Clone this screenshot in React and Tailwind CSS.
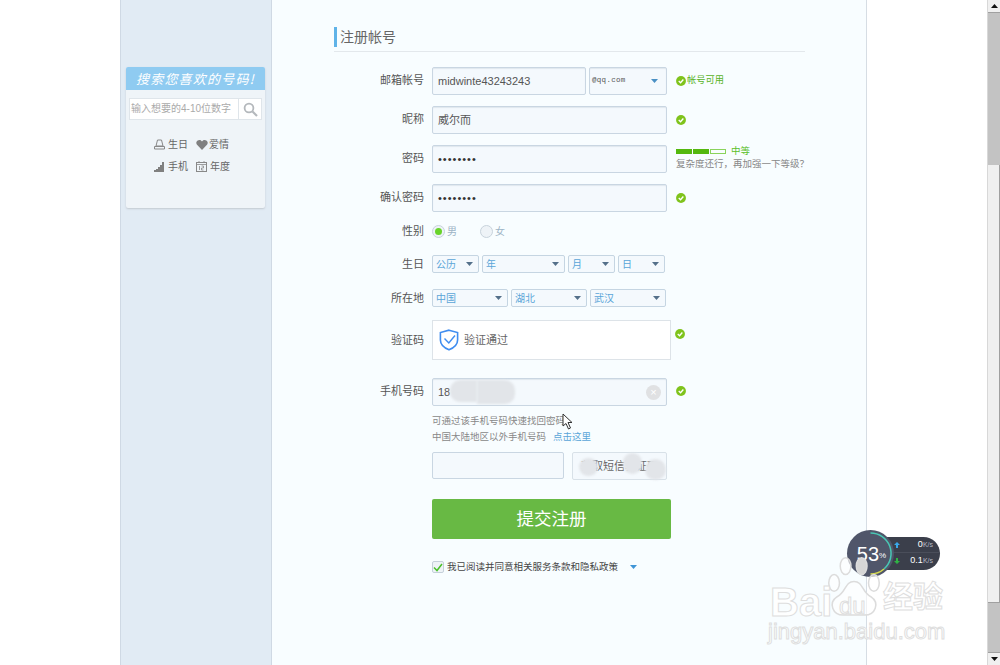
const font = "font-['Liberation_Sans','Noto_Sans_CJK_SC',sans-serif]";

function Check() {
  return (
    <svg width="10" height="10" viewBox="0 0 11 11" className="shrink-0">
      <circle cx="5.5" cy="5.5" r="5.4" fill="#7fc31c" />
      <path d="M3 5.6 L5 7.4 L8.1 3.9" fill="none" stroke="#fff" strokeWidth="1.5" />
    </svg>
  );
}

function Caret({ color = "#4a90c4" }) {
  return (
    <svg width="7" height="4" viewBox="0 0 7 4" className="shrink-0">
      <path d="M0 0H7L3.5 4Z" fill={color} />
    </svg>
  );
}

function Row({ label, className = "", labelClass = "leading-[26px]", children }) {
  return (
    <div className={`flex ${className}`}>
      <div className={`w-[90px] mr-2 text-right text-[11px] text-[#555] shrink-0 ${labelClass}`}>{label}</div>
      {children}
    </div>
  );
}

function Field({ className = "", children }) {
  return (
    <div className={`h-[28px] border border-[#c9d6e2] rounded-[2px] bg-[#f4f9fd] shadow-[inset_0_1px_1px_#dfe7ee] flex items-center px-[5px] text-[#555] relative ${className}`}>
      {children}
    </div>
  );
}

function Select({ text, width }) {
  return (
    <div style={{ width }} className="h-[18px] border border-[#c5d5e2] rounded-[2px] bg-[#f4f9fd] flex items-center justify-between pl-[3px] pr-[5px] text-[10px] text-[#5aa5d8]">
      <span>{text}</span>
      <Caret color="#54708a" />
    </div>
  );
}

function SideLink({ icon, text }) {
  return (
    <div className="flex items-center gap-[3px] text-[10px] text-[#666]">
      {icon}
      <span>{text}</span>
    </div>
  );
}

function Blot({ className }) {
  return <div className={`absolute bg-[#e2e5e9] blur-[1px] ${className}`} />;
}

function Scrollbar() {
  return (
    <div className="w-[13px] shrink-0 flex flex-col bg-[#c3c3c3] border-l border-[#d8d8d8]">
      <div className="h-[13px] bg-[#f0f0f0] border-b border-[#a0a0a0] flex items-center justify-center">
        <svg width="7" height="4" viewBox="0 0 7 4"><path d="M0 4H7L3.5 0Z" fill="#111" /></svg>
      </div>
      <div className="h-[152px]" />
      <div className="h-[438px] bg-[#f0f0f0] border-r border-[#a0a0a0] border-b" />
      <div className="flex-1" />
      <div className="h-[13px] bg-[#f0f0f0] border-t border-[#a0a0a0] flex items-center justify-center">
        <svg width="7" height="4" viewBox="0 0 7 4"><path d="M0 0H7L3.5 4Z" fill="#111" /></svg>
      </div>
    </div>
  );
}

function NetWidget() {
  return (
    <div className="absolute left-[847px] top-[530px] w-[94px] h-[47px]">
      <div className="absolute left-[30px] top-[7px] w-[63px] h-[33px] rounded-r-full bg-[#3b3f4b] text-[9px] text-[#b5bac4]">
        <div className="flex items-center h-[16px] pl-[17px] pr-[7px] justify-between border-b border-[#4a4e5a]">
          <svg width="6" height="6" viewBox="0 0 6 6"><path d="M3 0L6 3H4V6H2V3H0Z" fill="#3aa7e8" /></svg>
          <span><b className="font-normal text-white">0</b><span className="text-[7px]">K/s</span></span>
        </div>
        <div className="flex items-center h-[16px] pl-[17px] pr-[7px] justify-between">
          <svg width="6" height="6" viewBox="0 0 6 6"><path d="M3 6L6 3H4V0H2V3H0Z" fill="#2fb344" /></svg>
          <span><b className="font-normal text-white">0.1</b><span className="text-[7px]">K/s</span></span>
        </div>
      </div>
      <div className="absolute left-0 top-0 w-[47px] h-[47px] rounded-full bg-[#50566a] flex items-center justify-center text-white">
        <svg width="47" height="47" viewBox="0 0 47 47" className="absolute inset-0">
          <path d="M23.5 3 A20.5 20.5 0 0 1 37 39" fill="none" stroke="#49c6b4" strokeWidth="1.5" />
          <path d="M37 39 A20.5 20.5 0 0 1 23.5 44" fill="none" stroke="#d6d94e" strokeWidth="1.5" />
        </svg>
        <span className="text-[20px] font-light ml-[2px]">53</span>
        <span className="text-[8px] mt-[5px]">%</span>
      </div>
    </div>
  );
}

function Watermark() {
  const stroke = "text-white/80 [-webkit-text-stroke:1px_#dedede]";
  return (
    <div className="absolute left-[766px] top-[555px] w-[190px] h-[90px] font-['Liberation_Sans','Noto_Sans_CJK_SC',sans-serif]">
      <svg width="52" height="62" viewBox="0 0 68 80" className="absolute left-[62px] top-0">
        <g fill="#fff" fillOpacity="0.6" stroke="#dcdcdc" strokeWidth="2">
          <ellipse cx="8" cy="36" rx="7" ry="11" />
          <ellipse cx="23" cy="14" rx="7" ry="11" />
          <ellipse cx="44" cy="14" rx="7" ry="11" fill="#d6d6d6" fillOpacity="1" />
          <ellipse cx="60" cy="36" rx="7" ry="11" />
          <path d="M34 34 C46 34 44 48 56 54 C68 62 62 78 48 78 H20 C6 78 0 62 12 54 C24 48 22 34 34 34Z" />
        </g>
      </svg>
      <div className={`absolute left-[4px] top-[31px] text-[40px] font-bold leading-[32px] ${stroke}`}>Bai</div>
      <div className={`absolute left-[73px] top-[40px] text-[24px] leading-[22px] ${stroke}`}>du</div>
      <div className={`absolute left-[117px] top-[24px] text-[30px] font-bold leading-[36px] ${stroke}`}>经验</div>
      <div className={`absolute left-[2px] top-[64px] text-[22px] leading-[26px] ${stroke}`}>jingyan.baidu.com</div>
    </div>
  );
}

function Cursor() {
  return (
    <svg width="12" height="17" viewBox="0 0 12 17" className="absolute left-[562px] top-[413px]">
      <path d="M1 1V13L4 10.5L6.5 16L8.5 15L6 9.5H10Z" fill="#fff" stroke="#333" strokeWidth="1" />
    </svg>
  );
}

export default function App() {
  return (
    <div className={`relative w-[1000px] h-[665px] overflow-hidden flex bg-white ${font}`}>
      <div className="w-[120px] shrink-0" />

      {/* left column */}
      <div className="w-[152px] shrink-0 border-x border-[#cfd9e4] bg-[#e1ebf4] pt-[67px] pl-[5px]">
        <div className="w-[139px] h-[141px] rounded-[2px] bg-[#eff4f8] shadow-[0_1px_2px_#c2c9d0]">
          <div className="h-[23px] rounded-t-[2px] bg-[#8fcbf1] text-white text-[13px] italic tracking-[1.2px] text-center leading-[23px] whitespace-nowrap font-['Noto_Sans_CJK_SC',sans-serif]">
            搜索您喜欢的号码!
          </div>
          <div className="mx-[3px] mt-[8px] h-[22px] flex border border-[#dfe5ea] bg-white">
            <div className="flex-1 text-[10px] text-[#aaa] leading-[20px] pl-[1px] whitespace-nowrap">输入想要的4-10位数字</div>
            <div className="w-[23px] border-l border-[#dfe5ea] flex items-center justify-center">
              <svg width="15" height="15" viewBox="0 0 15 15">
                <circle cx="6" cy="6" r="4.4" fill="none" stroke="#b4b8bc" strokeWidth="1.8" />
                <path d="M9.5 9.5L14 14" stroke="#b4b8bc" strokeWidth="2.2" />
              </svg>
            </div>
          </div>
          <div className="mt-[17px] pl-[28px] grid grid-cols-[42px_43px] gap-y-[7px]">
            <SideLink text="生日" icon={
              <svg width="11" height="11" viewBox="0 0 11 11"><path d="M3.5 1H7.5L9 7H2ZM0.5 7.5H10.5V10H0.5Z" fill="none" stroke="#888" /></svg>
            } />
            <SideLink text="爱情" icon={
              <svg width="12" height="10" viewBox="0 0 12 10" className="-mr-[2px]"><path d="M6 10L0.8 4.5C-0.8 2 1.5 0 3.5 0C4.6 0 5.5 0.7 6 1.5C6.5 0.7 7.4 0 8.5 0C10.5 0 12.8 2 11.2 4.5Z" fill="#808080" /></svg>
            } />
            <SideLink text="手机" icon={
              <svg width="11" height="10" viewBox="0 0 11 10"><path d="M0 10V8H2V7H4V5H6V3H8V0H10V10Z" fill="#808080" /></svg>
            } />
            <SideLink text="年度" icon={
              <svg width="11" height="11" viewBox="0 0 11 11">
                <rect x="0.5" y="1.5" width="10" height="9" fill="none" stroke="#888" />
                <path d="M0.5 3.5H10.5M3 0V2M8 0V2M3.5 5V9M5.5 5H7.5V7H5.5V9H7.5" fill="none" stroke="#888" strokeWidth="0.8" />
              </svg>
            } />
          </div>
        </div>
      </div>

      {/* form column */}
      <div className="w-[595px] shrink-0 border-r border-[#d6dde4] bg-[#f8fdff] pl-[62px] pt-[27px]">
        <div className="w-[471px] border-b border-[#e3e8ec] h-[25px]">
          <div className="h-[20px] border-l-[3px] border-[#5fb3e8] pl-[3px] text-[14px] leading-[20px] text-[#666]">注册帐号</div>
        </div>

        <Row label="邮箱帐号" className="mt-[15px] h-[28px]">
          <Field className="w-[154px] text-[11px]">midwinte43243243</Field>
          <Field className="w-[78px] ml-[3px] justify-between pr-[8px]">
            <span className="-ml-[3px] text-[7.5px] tracking-[0.3px] font-['Liberation_Mono',monospace]">@qq.com</span>
            <Caret />
          </Field>
          <div className="ml-[9px] flex items-center gap-[1px] text-[9.25px] text-[#58b31f] h-[28px]">
            <Check />
            <span>帐号可用</span>
          </div>
        </Row>

        <Row label="昵称" className="mt-[11px] h-[28px]">
          <Field className="w-[235px] text-[11px]">威尔而</Field>
          <div className="ml-[9px] flex items-center h-[28px]"><Check /></div>
        </Row>

        <Row label="密码" className="mt-[11px] h-[28px]">
          <Field className="w-[235px] text-[11px] tracking-[1px]"><span className="text-[#333]">••••••••</span></Field>
          <div className="ml-[9px] text-[9.5px] text-[#888] whitespace-nowrap">
            <div className="flex items-center h-[12px] text-[#5cc02a]">
              <span className="w-[16px] h-[5px] bg-[#54b80e]" />
              <span className="w-[16px] h-[5px] bg-[#54b80e] ml-[1px]" />
              <span className="w-[16px] h-[5px] border border-[#8ad35c] ml-[1px]" />
              <span className="ml-[5px]">中等</span>
            </div>
            <div className="leading-[14px]">复杂度还行，再加强一下等级？</div>
          </div>
        </Row>

        <Row label="确认密码" className="mt-[11px] h-[28px]">
          <Field className="w-[235px] text-[11px] tracking-[1px]"><span className="text-[#333]">••••••••</span></Field>
          <div className="ml-[9px] flex items-center h-[28px]"><Check /></div>
        </Row>

        <Row label="性别" className="mt-[6px] h-[24px]">
          <div className="flex items-center h-[26px] text-[10px] text-[#9db4c6]">
            <span className="w-[13px] h-[13px] rounded-full border border-[#c8d3dc] bg-[#eef3f7] flex items-center justify-center">
              <span className="w-[7px] h-[7px] rounded-full bg-[#68d42a]" />
            </span>
            <span className="ml-[2px]">男</span>
            <span className="w-[13px] h-[13px] rounded-full border border-[#c8d3dc] bg-[#eef3f7] ml-[23px]" />
            <span className="ml-[2px]">女</span>
          </div>
        </Row>

        <Row label="生日" className="mt-[13px] h-[18px] items-center" labelClass="leading-[18px]">
          <div className="flex gap-[3px]">
            <Select text="公历" width={47} />
            <Select text="年" width={83} />
            <Select text="月" width={47} />
            <Select text="日" width={47} />
          </div>
        </Row>

        <Row label="所在地" className="mt-[16px] h-[18px] items-center" labelClass="leading-[18px]">
          <div className="flex gap-[3px]">
            <Select text="中国" width={76} />
            <Select text="湖北" width={76} />
            <Select text="武汉" width={76} />
          </div>
        </Row>

        <Row label="验证码" className="mt-[13px] h-[40px]" labelClass="leading-[40px]">
          <div className="w-[239px] h-[40px] border border-[#dde3e8] bg-white flex items-center pl-[6px] text-[11px] text-[#666] gap-[5px]">
            <svg width="20" height="22" viewBox="0 0 20 22">
              <path d="M10 1.2L18.6 3.6V11C18.6 15.5 14.5 19 10 20.8C5.5 19 1.4 15.5 1.4 11V3.6Z" fill="none" stroke="#3f8df0" strokeWidth="1.6" />
              <path d="M5.5 9.5L9.8 14L16 6.5" fill="none" stroke="#3f8df0" strokeWidth="1.4" />
            </svg>
            <span>验证通过</span>
          </div>
          <div className="ml-[4px] h-[28px] flex items-center"><Check /></div>
        </Row>

        <Row label="手机号码" className="mt-[18px] h-[28px]">
          <Field className="w-[235px] text-[11px]">
            18
            <Blot className="left-[17px] top-[1px] w-[27px] h-[22px] rounded-l-[10px]" />
            <Blot className="left-[44px] top-[1px] w-[38px] h-[24px] rounded-r-[10px]" />
            <span className="absolute right-[5px] top-[6px] w-[15px] h-[15px] rounded-full bg-[#e0e1e3] text-white text-[11px] leading-[15px] text-center">×</span>
          </Field>
          <div className="ml-[9px] flex items-center h-[26px]"><Check /></div>
        </Row>

        <div className="ml-[98px] mt-[7px] text-[9.5px] leading-[16px] text-[#888] h-[32px]">
          <div>可通过该手机号码快速找回密码</div>
          <div>中国大陆地区以外手机号码<span className="ml-[7px] text-[#5aa5d8]">点击这里</span></div>
        </div>

        <div className="ml-[98px] mt-[7px] flex gap-[8px]">
          <div className="w-[132px] h-[27px] border border-[#c9d6e2] rounded-[2px] bg-[#f4f9fd]" />
          <div className="relative w-[95px] h-[28px] border border-[#d8e1e8] rounded-[2px] bg-[#f4f9fd] text-[11px] leading-[26px] text-[#666] text-center whitespace-nowrap">
            获取短信验证码
            <Blot className="left-[6px] top-[5px] w-[19px] h-[18px] rounded-full" />
            <Blot className="left-[50px] top-[0px] w-[19px] h-[21px] rounded-full" />
            <Blot className="left-[72px] top-[6px] w-[21px] h-[21px] rounded-full" />
          </div>
        </div>

        <div className="ml-[98px] mt-[19px] w-[239px] h-[40px] rounded-[2px] bg-[#68b944] text-white text-[17.5px] leading-[40px] text-center">提交注册</div>

        <div className="ml-[98px] mt-[21px] flex items-center text-[9.5px] text-[#444] h-[14px]">
          <span className="w-[12px] h-[12px] border border-[#c5d0da] rounded-[2px] bg-[#eef3f7] flex items-center justify-center">
            <svg width="10" height="9" viewBox="0 0 10 9"><path d="M1 4.5L4 7.5L9 1" fill="none" stroke="#4ac02a" strokeWidth="1.5" /></svg>
          </span>
          <span className="ml-[3px]">我已阅读并同意相关服务条款和隐私政策</span>
          <span className="ml-[12px]"><Caret color="#3f95d6" /></span>
        </div>
      </div>

      <div className="flex-1" />
      <Scrollbar />

      <Cursor />
      <NetWidget />
      <Watermark />
    </div>
  );
}
